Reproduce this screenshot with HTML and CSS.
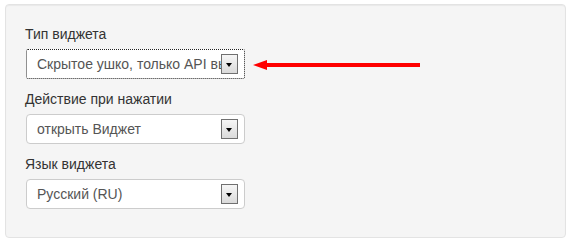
FILE: index.html
```html
<!DOCTYPE html>
<html lang="ru">
<head>
    <meta charset="UTF-8">
    <title>Настройки виджета</title>
    <link rel="stylesheet" href="styles.css">
</head>
<body>
    <!-- Widget settings panel -->
    <div class="well">
        <label class="field-label">Тип виджета</label>
        <div class="field-row">
            <div class="fake-select focused">
                <span class="select-text">Скрытое ушко, только API вызов</span>
                <span class="select-btn"><span class="caret"></span></span>
            </div>
            <svg class="pointer-arrow" width="168" height="10" viewBox="0 0 168 10">
                <polygon points="0,5 14,0 14,3 167,3 167,7 14,7 14,10" fill="#ff0000"/>
            </svg>
        </div>

        <label class="field-label">Действие при нажатии</label>
        <div class="field-row">
            <div class="fake-select">
                <span class="select-text">открыть Виджет</span>
                <span class="select-btn"><span class="caret"></span></span>
            </div>
        </div>

        <label class="field-label">Язык виджета</label>
        <div class="field-row">
            <div class="fake-select">
                <span class="select-text">Русский (RU)</span>
                <span class="select-btn"><span class="caret"></span></span>
            </div>
        </div>
    </div>
</body>
</html>
```

FILE: styles.css
```css
/* Widget settings page */
body {
    margin: 4px 4px 0 5px;
    background: #fff;
    font-family: "Liberation Sans", Arial, sans-serif;
    font-size: 14px;
    color: #333;
}

/* Grey panel */
.well {
    background-color: #f5f5f5;
    border: 1px solid #e3e3e3;
    border-radius: 4px;
    box-shadow: inset 0 1px 1px rgba(0,0,0,0.05);
    padding: 19px 19px 9px 19px;
    height: 204px;
}

.field-label {
    display: block;
    line-height: 20px;
    margin-bottom: 5px;
}

.field-row {
    display: flex;
    align-items: center;
    margin-bottom: 10px;
}

/* Select box drawn by hand so it looks the same everywhere */
.fake-select {
    display: flex;
    align-items: center;
    box-sizing: border-box;
    width: 219px;
    height: 30px;
    margin-left: 1px;
    padding: 0 6px 0 10px;
    background: #fff;
    border: 1px solid #ccc;
    border-radius: 4px;
    color: #555;
}

.fake-select.focused {
    border: 1px dotted #222;
    border-radius: 2px;
}

.select-text {
    flex: 1;
    overflow: hidden;
    white-space: nowrap;
}

.select-btn {
    flex: none;
    position: relative;
    box-sizing: border-box;
    width: 17px;
    height: 20px;
    border: 1px solid #707070;
    background: linear-gradient(#f6f6f6, #dadada);
}

.caret {
    position: absolute;
    left: 4px;
    top: 8px;
    width: 0;
    height: 0;
    border-left: 3.5px solid transparent;
    border-right: 3.5px solid transparent;
    border-top: 4px solid #000;
}

.pointer-arrow {
    margin-left: 8px;
    margin-top: 1px;
}
```
